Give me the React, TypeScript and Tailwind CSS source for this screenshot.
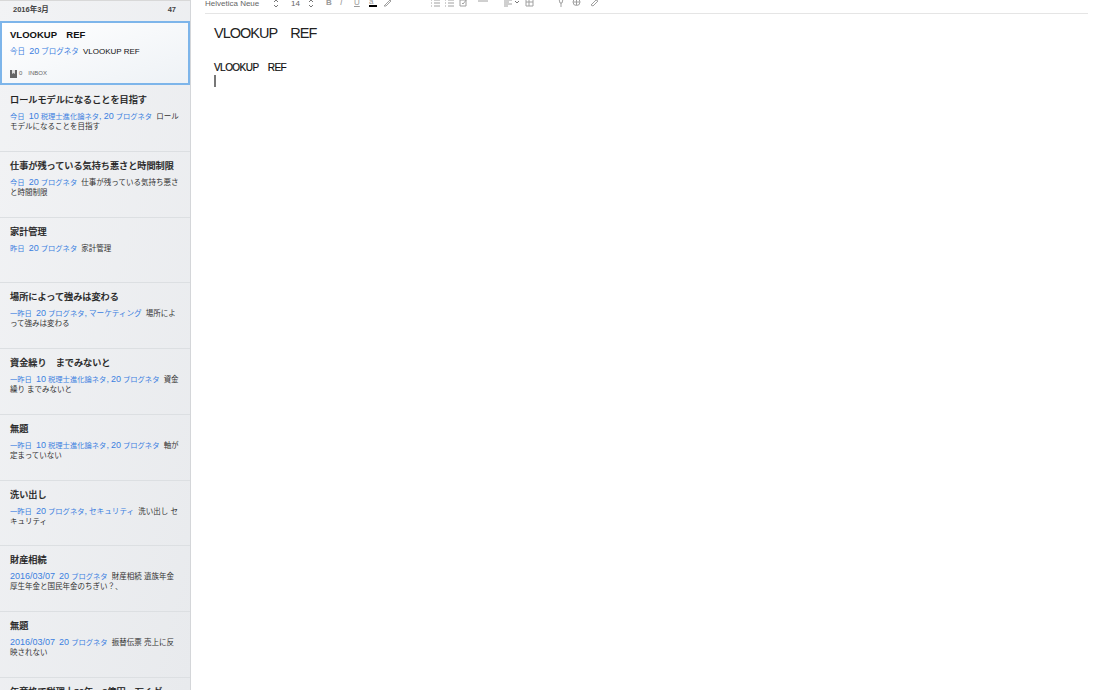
const font = "[font-family:'Liberation_Sans','Noto_Sans_CJK_JP',sans-serif]";

type Note = { title: string; date: string; tags: string; body: string };
const notes: Note[] = [
  { title: "ロールモデルになることを目指す", date: "今日", tags: "10 税理士進化論ネタ, 20 ブログネタ", body: "ロールモデルになることを目指す" },
  { title: "仕事が残っている気持ち悪さと時間制限", date: "今日", tags: "20 ブログネタ", body: "仕事が残っている気持ち悪さと時間制限" },
  { title: "家計管理", date: "昨日", tags: "20 ブログネタ", body: "家計管理" },
  { title: "場所によって強みは変わる", date: "一昨日", tags: "20 ブログネタ, マーケティング", body: "場所によって強みは変わる" },
  { title: "資金繰り　までみないと", date: "一昨日", tags: "10 税理士進化論ネタ, 20 ブログネタ", body: "資金繰り までみないと" },
  { title: "無題", date: "一昨日", tags: "10 税理士進化論ネタ, 20 ブログネタ", body: "軸が定まっていない" },
  { title: "洗い出し", date: "一昨日", tags: "20 ブログネタ, セキュリティ", body: "洗い出し セキュリティ" },
  { title: "財産相続", date: "2016/03/07", tags: "20 ブログネタ", body: "財産相続 遺族年金 厚生年金と国民年金のちぎい？、" },
  { title: "無題", date: "2016/03/07", tags: "20 ブログネタ", body: "振替伝票 売上に反映されない" },
  { title: "年商格で税理士30年、2億円　万くが", date: "", tags: "", body: "" },
];

// The reference sets Latin digits larger than the CJK glyphs beside them,
// and its trailing katakana tags run slightly wider than the other tag text.
function Mixed({ text }: { text: string }) {
  const parts = text.split(/([0-9/,]+|マーケティング|セキュリティ)/);
  return (
    <>
      {parts.map((p, i) =>
        /^[0-9/,]+$/.test(p) ? (
          <span key={i} className="text-[9px]">{p}</span>
        ) : p === "マーケティング" || p === "セキュリティ" ? (
          <span key={i} className="text-[7.6px]">{p}</span>
        ) : (
          <span key={i}>{p}</span>
        ),
      )}
    </>
  );
}

function Row({ n }: { n: Note }) {
  return (
    <div className="h-[65.75px] shrink-0 border-b border-[#dcdfe2] pl-[10px] pr-[9px] pt-[7px]">
      <div className="text-[9.15px] leading-[14px] font-medium text-[#222] whitespace-nowrap [-webkit-text-stroke:0.2px_#222]">{n.title}</div>
      <div className="mt-[4px] text-[7.5px] leading-[10px] text-[#333]">
        <span className="text-[7.3px] text-[#3b80e0]">
          <Mixed text={n.date} />
          {n.date ? "\u00a0\u00a0" : ""}
          <Mixed text={n.tags} />
        </span>
        {n.body ? "\u00a0\u00a0" : ""}
        {n.body}
      </div>
    </div>
  );
}

const stroke = "#a0a0a0";
function Chev() {
  return (
    <svg width="6" height="9" viewBox="0 0 6 9" fill="none" stroke="#777" strokeWidth="1">
      <path d="M1 3l2-2 2 2M1 6l2 2 2-2" />
    </svg>
  );
}
function Ico({ w = 9, children }: { w?: number; children: React.ReactNode }) {
  return (
    <svg width={w} height="9" viewBox={`0 0 ${w} 9`} fill="none" stroke={stroke} strokeWidth="1" className="shrink-0">
      {children}
    </svg>
  );
}

export default function App() {
  return (
    <div className={`${font} flex h-[690px] w-[1098px] overflow-hidden bg-white`}>
      <aside className="flex h-full w-[191px] shrink-0 flex-col overflow-hidden border-r border-[#d4d6d9] bg-gradient-to-br from-[#f2f3f5] to-[#e8eaed]">
        <div className="flex h-[21px] shrink-0 items-center justify-between border-t border-[#d8d8d8] pb-[2px] pl-[13px] pr-[14px] text-[7.5px] font-bold text-[#444]">
          <span>2016年3月</span>
          <span>47</span>
        </div>
        <div className="relative h-[64px] shrink-0 border-2 border-[#7db5ea] bg-gradient-to-br from-white to-[#eef2f6] pl-[8px] pr-[8px] pt-[5px]">
          <div className="text-[9.5px] leading-[14px] font-bold text-[#111]">VLOOKUP　REF</div>
          <div className="mt-[4px] text-[7.5px] leading-[10px] text-[#111]">
            <span className="text-[#3b80e0]">今日&nbsp;&nbsp;<span className="text-[9px]">20</span> ブログネタ</span>&nbsp;&nbsp;<span className="text-[8px]">VLOOKUP REF</span>
          </div>
          <div className="absolute bottom-[5px] left-[8px] flex items-center text-[6px] text-[#666]">
            <svg width="7" height="8" viewBox="0 0 7 8" className="mr-[2px]">
              <path d="M0 0h7v8H0z" fill="#666" />
              <path d="M2 0h3v4L3.5 3 2 4z" fill="#ddd" />
            </svg>
            <span>0</span>
            <span className="ml-[6px]">INBOX</span>
          </div>
        </div>
        <div className="mt-[1px] flex flex-col">
          {notes.map((n, i) => (
            <Row key={i} n={n} />
          ))}
        </div>
      </aside>
      <main className="min-w-0 flex-1 pl-[14px] pr-[10px]">
        <div className="flex h-[14px] items-start overflow-hidden border-b border-[#e5e5e5] text-[8px] leading-[8px] text-[#666]">
          <div className="-mt-[1px] flex items-center">
            <span className="w-[68px] whitespace-nowrap">Helvetica Neue</span>
            <Chev />
            <span className="ml-[12px] w-[13px]">14</span>
            <span className="ml-[4px]"><Chev /></span>
          </div>
          <div className="-mt-[2px] ml-[12px] flex items-center gap-[6px] text-[#999]">
            <span className="w-[8px] font-bold leading-[9px]">B</span>
            <span className="w-[8px] italic leading-[9px]">I</span>
            <span className="w-[8px] underline leading-[9px]">U</span>
            <span className="ml-[1px] w-[8px] border-b-2 border-black leading-[7px]">a</span>
            <Ico><path d="M2 7l5-5 1 1-5 5H1z" /></Ico>
          </div>
          <div className="-mt-[2px] ml-[39px] flex items-center gap-[5px]">
            <Ico><path d="M3 2h6M3 5h6M3 8h6M0 2h1M0 5h1M0 8h1" /></Ico>
            <Ico><path d="M3 2h6M3 5h6M3 8h6M0 2h1M0 5h1M0 8h1" /></Ico>
            <Ico><path d="M1 2h6v6H1z" /><path d="M3 5l1 1 4-5" /></Ico>
            <span className="ml-[5px]"><Ico w={10}><path d="M0 3h10" /></Ico></span>
            <span className="ml-[11px] flex items-center gap-[1px]">
              <Ico><path d="M0 2h8M0 4h5M0 6h8M0 8h4" /></Ico>
              <svg width="6" height="9" viewBox="0 0 6 9" fill="none" stroke="#777"><path d="M1 3l2 2 2-2" /></svg>
            </span>
            <Ico><path d="M1 1h7v7H1zM1 4h7M4 1v7" /></Ico>
          </div>
          <div className="-mt-[2px] ml-[24px] flex items-center gap-[8px]">
            <Ico w={6}><path d="M1 1h4L4 5H2zM3 5v4" /></Ico>
            <Ico><circle cx="4.5" cy="4" r="3.5" /><path d="M1 4h7M4.5 1v6" /></Ico>
            <span className="ml-[1px]"><Ico><path d="M1 7l5-5 2 1-5 5z" /></Ico></span>
          </div>
        </div>
        <div className="pl-[9px]">
          <div className="mt-[10px] text-[14.5px] leading-[18px] tracking-[-1px] text-[#222]">VLOOKUP　REF</div>
          <div className="mt-[19px] text-[10px] leading-[14px] tracking-[-0.55px] text-[#111] [-webkit-text-stroke:0.2px_#111]">VLOOKUP　REF</div>
          <div className="h-[12px] w-[2px] bg-[#777]" />
        </div>
      </main>
    </div>
  );
}
